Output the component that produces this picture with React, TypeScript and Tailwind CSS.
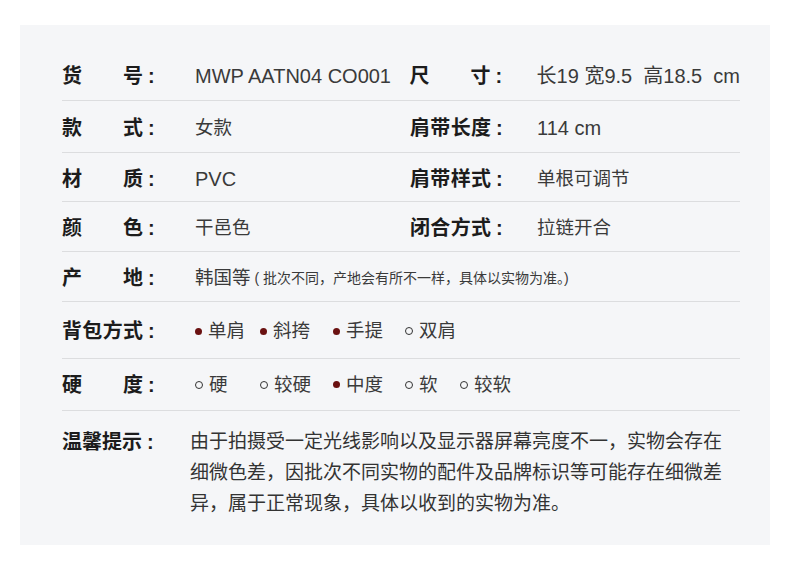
const font = { fontFamily: '"Liberation Sans", "Noto Sans CJK SC", sans-serif' };

function Label({ chars, w = "w-[133px]" }: { chars: string[]; w?: string }) {
  return (
    <div className={`flex shrink-0 items-center ${w} text-[20px] font-bold text-[#1c1c1c]`}>
      <span className="flex w-[81px] justify-between">
        {chars.map((c, i) => (
          <span key={i}>{c}</span>
        ))}
      </span>
      <span className="ml-[5px]">:</span>
    </div>
  );
}

function Dot({ on }: { on: boolean }) {
  return on ? (
    <span className="h-[7px] w-[7px] shrink-0 rounded-full bg-[#6a1111]" />
  ) : (
    <span className="h-[8px] w-[8px] shrink-0 rounded-full border-[1.5px] border-[#333]" />
  );
}

function Option({ on, text, w }: { on: boolean; text: string; w: string }) {
  return (
    <div className={`flex items-center gap-[6px] ${w}`}>
      <Dot on={on} />
      <span>{text}</span>
    </div>
  );
}

const widths = ["w-[65px]", "w-[73px]", "w-[72px]", "w-[55px]", ""];

export default function App() {
  return (
    <div className="min-h-[569px] w-[790px] bg-white px-5 pt-[25px]" style={font}>
      <div className="h-[520px] bg-[#f5f6f8] pt-[25px] pr-[30px] pl-[42px]">
        {/* row 1 */}
        <div className="flex h-[51px] items-center border-b border-[#dcdddf] pt-[2px] text-[18.5px] text-[#3a3a3a]">
          <div className="flex w-[348px] items-center">
            <Label chars={["货", "号"]} />
            <span className="text-[20px]">MWP AATN04 CO001</span>
          </div>
          <div className="flex items-center">
            <Label chars={["尺", "寸"]} w="w-[127px]" />
            <span className="text-[20px] whitespace-pre">长19 宽9.5  高18.5  cm</span>
          </div>
        </div>
        {/* row 2 */}
        <div className="flex h-[52px] items-center border-b border-[#dcdddf] pt-[2px] text-[18.5px] text-[#3a3a3a]">
          <div className="flex w-[348px] items-center">
            <Label chars={["款", "式"]} />
            <span>女款</span>
          </div>
          <div className="flex items-center">
            <Label chars={["肩", "带", "长", "度"]} w="w-[127px]" />
            <span className="text-[20px]">114 cm</span>
          </div>
        </div>
        {/* row 3 */}
        <div className="flex h-[49px] items-center border-b border-[#dcdddf] pt-[4px] text-[18.5px] text-[#3a3a3a]">
          <div className="flex w-[348px] items-center">
            <Label chars={["材", "质"]} />
            <span className="text-[20px]">PVC</span>
          </div>
          <div className="flex items-center">
            <Label chars={["肩", "带", "样", "式"]} w="w-[127px]" />
            <span>单根可调节</span>
          </div>
        </div>
        {/* row 4 */}
        <div className="flex h-[50px] items-center border-b border-[#dcdddf] pt-[3px] text-[18.5px] text-[#3a3a3a]">
          <div className="flex w-[348px] items-center">
            <Label chars={["颜", "色"]} />
            <span>干邑色</span>
          </div>
          <div className="flex items-center">
            <Label chars={["闭", "合", "方", "式"]} w="w-[127px]" />
            <span>拉链开合</span>
          </div>
        </div>
        {/* row 5 */}
        <div className="flex h-[50px] items-center border-b border-[#dcdddf] pt-[3px] text-[18.5px] text-[#3a3a3a]">
          <Label chars={["产", "地"]} />
          <span>韩国等</span>
          <span className="ml-[4px] text-[14px] whitespace-pre">( 批次不同，产地会有所不一样，具体以实物为准。)</span>
        </div>
        {/* row 6 */}
        <div className="flex h-[57px] items-center border-b border-[#dcdddf] pt-[2px] text-[18.5px] text-[#3a3a3a]">
          <Label chars={["背", "包", "方", "式"]} />
          {[
            { on: true, t: "单肩" },
            { on: true, t: "斜挎" },
            { on: true, t: "手提" },
            { on: false, t: "双肩" },
          ].map((o, i) => (
            <Option key={o.t} on={o.on} text={o.t} w={widths[i]} />
          ))}
        </div>
        {/* row 7 */}
        <div className="flex h-[52px] items-center border-b border-[#dcdddf] text-[18.5px] text-[#3a3a3a]">
          <Label chars={["硬", "度"]} />
          {[
            { on: false, t: "硬" },
            { on: false, t: "较硬" },
            { on: true, t: "中度" },
            { on: false, t: "软" },
            { on: false, t: "较软" },
          ].map((o, i) => (
            <Option key={o.t} on={o.on} text={o.t} w={widths[i]} />
          ))}
        </div>
        {/* warm tip */}
        <div className="flex pt-[15px]">
          <div className="flex h-[31px] w-[128px] shrink-0 items-center text-[20px] font-bold text-[#1c1c1c]">
            <span>温馨提示</span>
            <span className="ml-[5px]">:</span>
          </div>
          <div className="text-[19px] leading-[31px] whitespace-nowrap text-[#333]">
            <div>由于拍摄受一定光线影响以及显示器屏幕亮度不一，实物会存在</div>
            <div>细微色差，因批次不同实物的配件及品牌标识等可能存在细微差</div>
            <div>异，属于正常现象，具体以收到的实物为准。</div>
          </div>
        </div>
      </div>
    </div>
  );
}
